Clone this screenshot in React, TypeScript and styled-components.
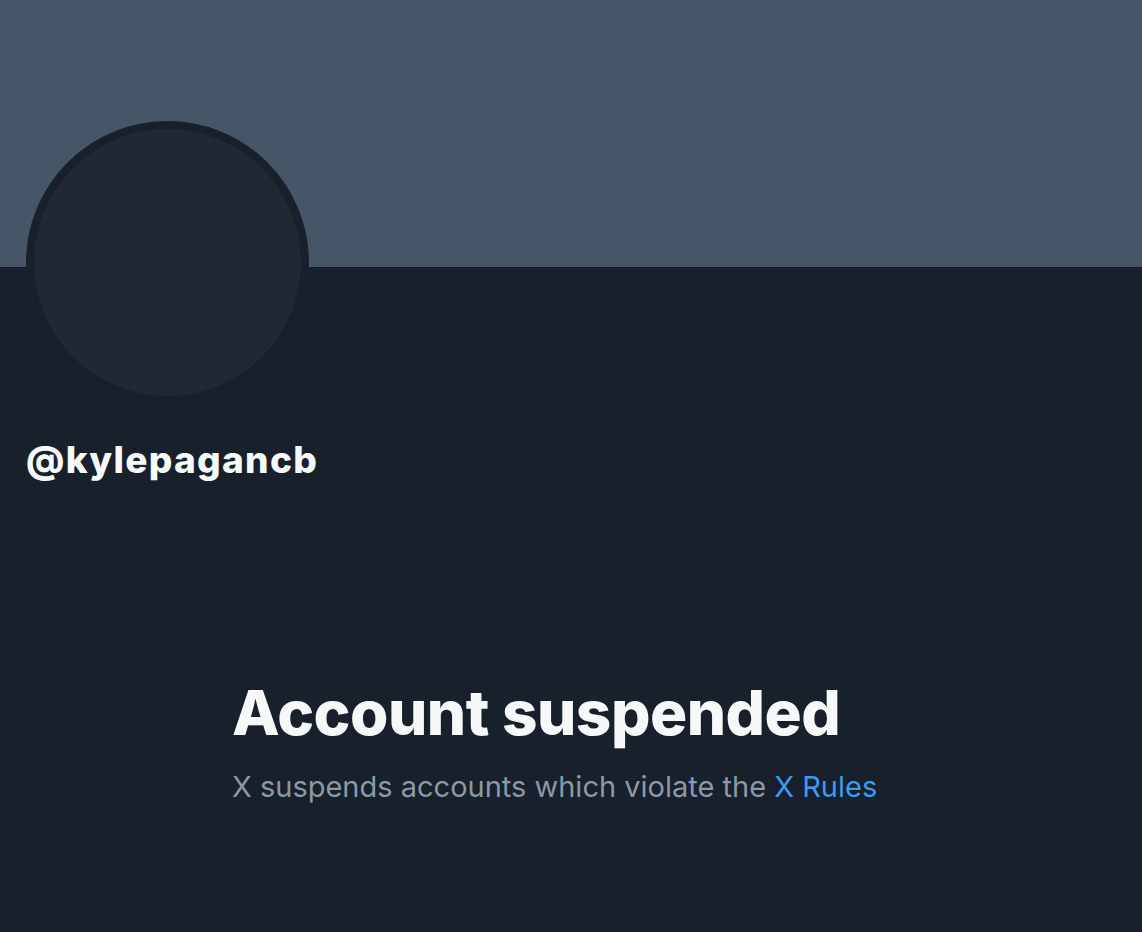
import React from 'react';
import styled, { createGlobalStyle } from 'styled-components';

const GlobalStyle = createGlobalStyle`
  html, body {
    margin: 0;
    padding: 0;
    background: #18202b;
  }
  body {
    font-family: Inter, "Open Sans", "Liberation Sans", sans-serif;
    -webkit-font-smoothing: antialiased;
  }
`;

const Page = styled.div`
  min-height: 932px;
  background: #18202b;
  display: flex;
  flex-direction: column;
`;

const Banner = styled.div`
  height: 267px;
  background: #475666;
`;

const ProfileHeader = styled.div`
  display: flex;
  flex-direction: column;
  align-items: flex-start;
  padding-left: 26px;
`;

const Avatar = styled.div`
  width: 267px;
  height: 267px;
  margin-top: -146px;
  border-radius: 50%;
  border: 8px solid #18202b;
  background: #212831;
`;

const Handle = styled.div`
  margin-top: 32px;
  font-size: 37px;
  font-weight: 800;
  line-height: 48px;
  letter-spacing: 1.3px;
  color: #f7f9f9;
`;

const Notice = styled.div`
  width: 678px;
  margin: 193px auto 0;
  display: flex;
  flex-direction: column;
`;

const Title = styled.h1`
  margin: 0;
  font-size: 62px;
  font-weight: 800;
  line-height: 72px;
  letter-spacing: -0.5px;
  color: #f7f9f9;
`;

const Subtitle = styled.p`
  margin: 18px 0 0;
  font-size: 29px;
  font-weight: 400;
  line-height: 40px;
  color: #8b98a5;
`;

const RulesLink = styled.a`
  color: #3b9bf0;
  text-decoration: none;
`;

export default function App() {
  return (
    <Page>
      <GlobalStyle />
      <Banner />
      <ProfileHeader>
        <Avatar />
        <Handle>@kylepagancb</Handle>
      </ProfileHeader>
      <Notice>
        <Title>Account suspended</Title>
        <Subtitle>
          X suspends accounts which violate the <RulesLink href="#">X Rules</RulesLink>
        </Subtitle>
      </Notice>
    </Page>
  );
}
